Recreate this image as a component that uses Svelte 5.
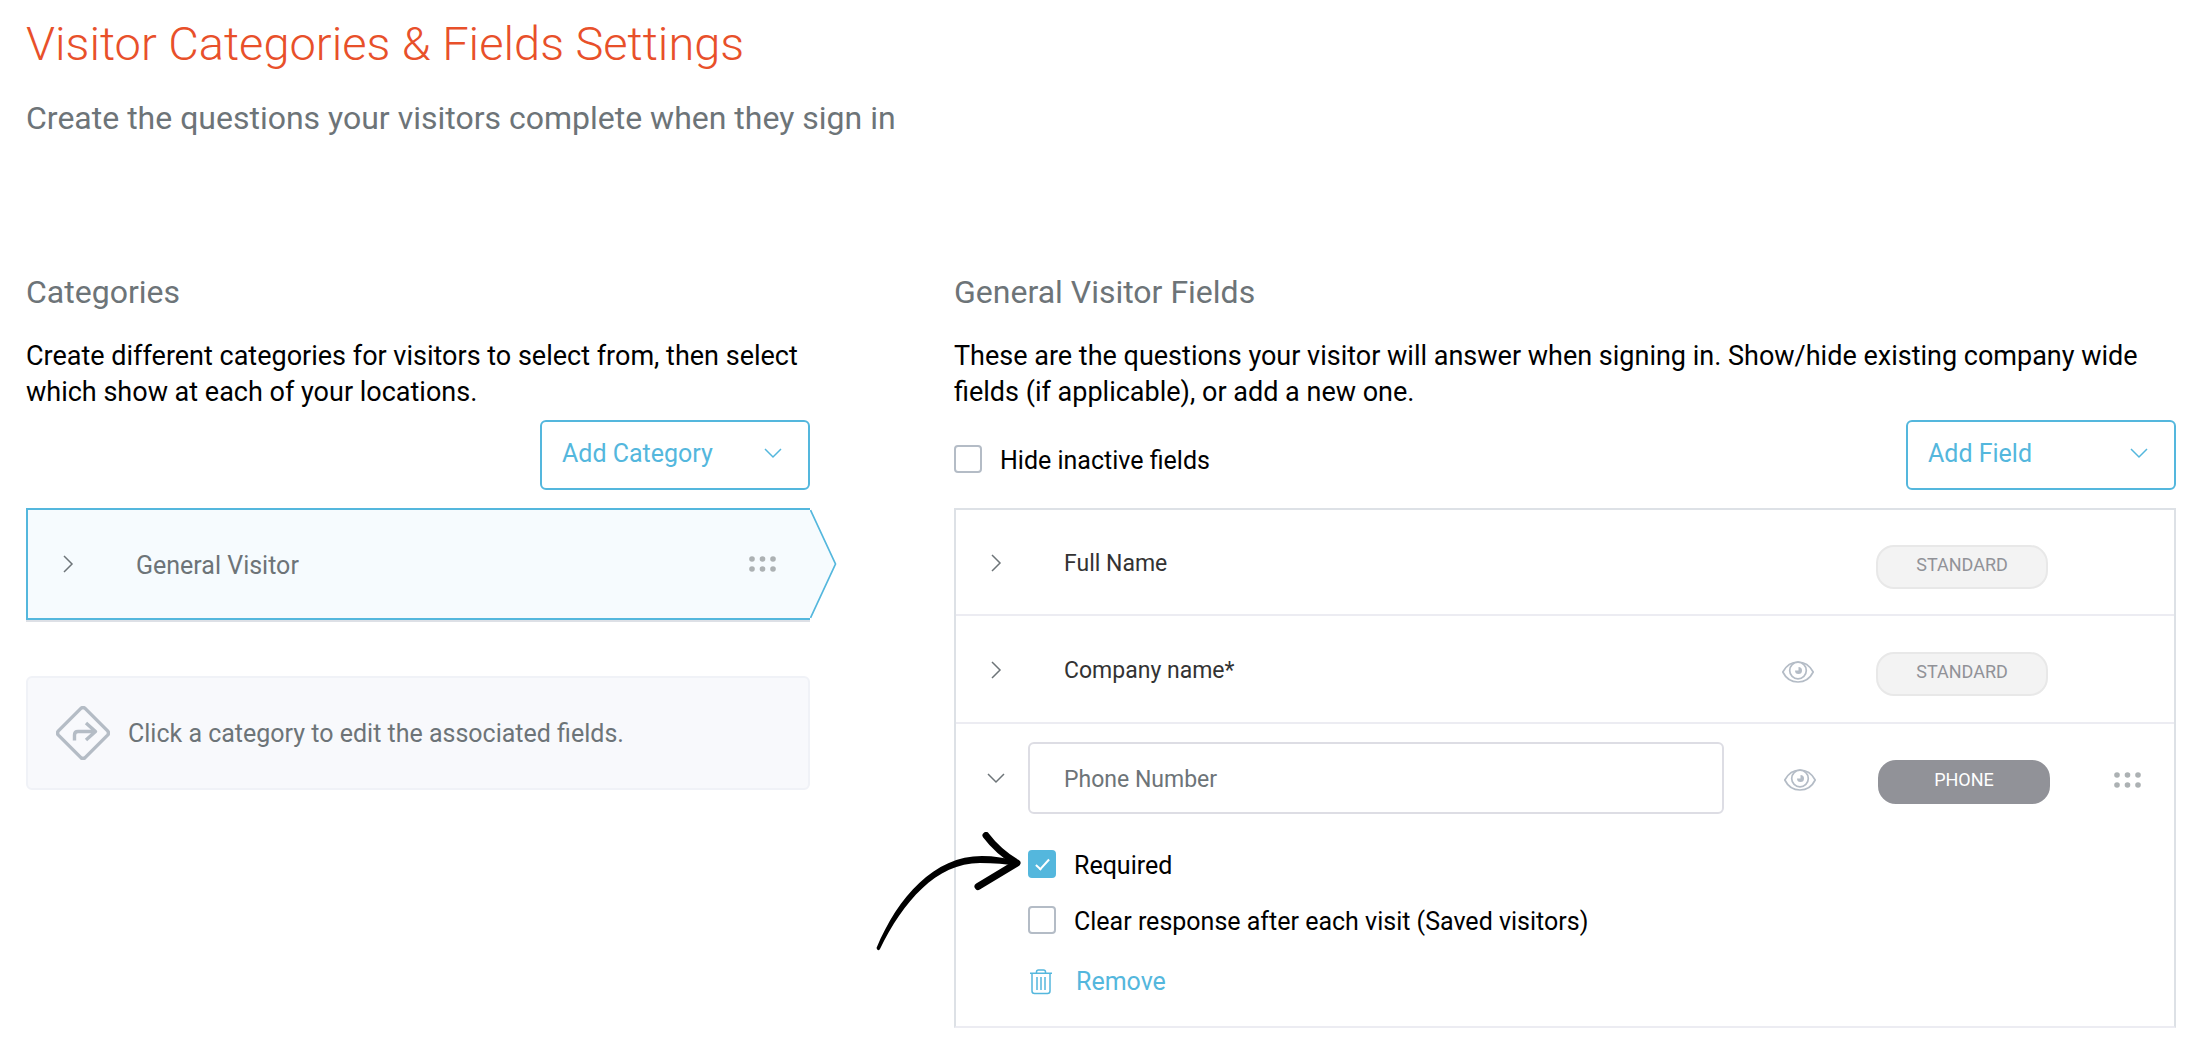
<script lang="ts">
  let hideInactive = $state(false);
  let required = $state(true);
  let clearResponse = $state(false);
  let phoneLabel = $state('');

  const standardFields = [
    { name: 'Full Name', canHide: false },
    { name: 'Company name*', canHide: true }
  ];
</script>

{#snippet chevronRight()}
  <svg width="12" height="18" viewBox="0 0 12 18" fill="none" stroke="currentColor" stroke-width="1.5" aria-hidden="true">
    <path d="M2 1l8 8-8 8" />
  </svg>
{/snippet}

{#snippet chevronDown()}
  <svg width="18" height="12" viewBox="0 0 18 12" fill="none" stroke="currentColor" stroke-width="1.5" aria-hidden="true">
    <path d="M1 2l8 8 8-8" />
  </svg>
{/snippet}

{#snippet grip()}
  <svg width="27" height="16" viewBox="0 0 27 16" fill="#acb1b3" aria-hidden="true">
    {#each [3, 13.5, 24] as cx}
      <circle {cx} cy="3" r="2.8" />
      <circle {cx} cy="13" r="2.8" />
    {/each}
  </svg>
{/snippet}

{#snippet eye()}
  <svg width="32" height="22" viewBox="0 0 32 22" fill="none" stroke="#b4bcc6" stroke-width="1.7" aria-hidden="true">
    <path d="M.8 11C4 5 9.5 1 16 1s12 4 15.2 10C28 17.5 22.5 21 16 21S4 17.5.8 11z" />
    <circle cx="16" cy="9.5" r="8.3" />
    <path d="M16.5 6v3.5H13a3.500 3.500 0 1 0 3.500-3.500z" fill="#b4bcc6" stroke="none" />
  </svg>
{/snippet}

<main>
  <header>
    <h1>Visitor Categories &amp; Fields Settings</h1>
    <p class="subtitle">Create the questions your visitors complete when they sign in</p>
  </header>

  <div class="columns">
    <section>
      <h2>Categories</h2>
      <p class="intro">Create different categories for visitors to select from, then select which show at each of your locations.</p>

      <div class="toolbar end">
        <button class="add-btn"><span>Add Category</span> {@render chevronDown()}</button>
      </div>

      <div class="category">
        <button class="toggle" aria-label="Expand category">{@render chevronRight()}</button>
        <span class="category-name">General Visitor</span>
        <button class="plain" aria-label="Reorder category">{@render grip()}</button>
        <svg class="point" width="28" height="112" viewBox="0 0 28 112" aria-hidden="true">
          <path d="M0 2h1l25 54-25 54H0z" fill="#f6fbfe" />
          <path d="M.5 2l25 54-25 54" fill="none" stroke="#54b7dd" stroke-width="1.7" />
        </svg>
      </div>

      <div class="hint">
        <svg width="54" height="54" viewBox="0 0 54 54" fill="none" stroke="#b4bcc5" stroke-width="3.4" stroke-linejoin="round" aria-hidden="true">
          <path d="M24.900 2.400q2.100-1.800 4.200 0l22.500 22.500q1.800 2.100 0 4.200L29.100 51.600q-2.100 1.800-4.200 0L2.400 29.100q-1.800-2.100 0-4.200z" />
          <path d="M18.500 34.500V29q0-3.500 3.500-3.500h17M30 17l9.500 8.500L30 34" />
        </svg>
        <span>Click a category to edit the associated fields.</span>
      </div>
    </section>

    <section>
      <h2>General Visitor Fields</h2>
      <p class="intro">These are the questions your visitor will answer when signing in. Show/hide existing company wide fields (if applicable), or add a new one.</p>

      <div class="toolbar">
        <label class="check"><input type="checkbox" bind:checked={hideInactive} /> <span>Hide inactive fields</span></label>
        <button class="add-btn"><span>Add Field</span> {@render chevronDown()}</button>
      </div>

      <div class="panel">
        {#each standardFields as field}
          <div class="row">
            <button class="toggle" aria-label="Expand {field.name}">{@render chevronRight()}</button>
            <span class="field-name">{field.name}</span>
            {#if field.canHide}
              <button class="plain eye" aria-label="Hide field">{@render eye()}</button>
            {/if}
            <span class="badge">STANDARD</span>
            <span class="handle"></span>
          </div>
        {/each}

        <!-- Expanded field -->
        <div class="row open">
          <button class="toggle" aria-label="Collapse Phone Number">{@render chevronDown()}</button>
          <input class="name-input" type="text" placeholder="Phone Number" aria-label="Field name" bind:value={phoneLabel} />
          <button class="plain eye" aria-label="Hide field">{@render eye()}</button>
          <span class="badge dark">PHONE</span>
          <span class="handle"><button class="plain" aria-label="Reorder field">{@render grip()}</button></span>
        </div>
        <div class="options">
          <label class="check"><input type="checkbox" bind:checked={required} /> <span>Required</span></label>
          <label class="check"><input type="checkbox" bind:checked={clearResponse} /> <span>Clear response after each visit (Saved visitors)</span></label>
          <button class="plain remove">
            <svg width="22" height="26" viewBox="0 0 22 26" fill="none" stroke="currentColor" stroke-width="1.5" aria-hidden="true">
              <path d="M0 4.300h22M6.500 4V3q0-2 2-2h5q2 0 2 2v1M2 4.500V22q0 2.500 2.500 2.500h13Q20 24.500 20 22V4.500M7 8v13M11 8v13M15 8v13" />
            </svg>
            <span>Remove</span>
          </button>

          <!-- Pointer to the Required option -->
          <svg class="arrow" width="150" height="124" viewBox="0 0 150 124" aria-hidden="true">
            <path d="M.5 116C22 65 58 24 106 24c12 0 24 2 36 5v5c-12-2-24-3-38-3C60 31 27 70 4 117q-2 3-3.500-1z" />
            <path d="M110 3.500q12 16 31 27.500L102 54.500" fill="none" stroke="#000" stroke-width="7" stroke-linecap="round" stroke-linejoin="round" />
          </svg>
        </div>
      </div>
    </section>
  </div>
</main>

<style>
  :global(body) {
    margin: 0;
    background: #fff;
  }

  main {
    padding: 12px 14px 14px 26px;
    font-family: Roboto, 'Liberation Sans', sans-serif;
    font-size: 25px;
    color: #000;
  }

  h1 {
    margin: 0;
    font-size: 47px;
    font-weight: 300;
    line-height: 64px;
    color: #e8502a;
  }

  .subtitle {
    margin: 22px 0 0;
    font-size: 32px;
    line-height: 40px;
    color: #6d7478;
  }

  .columns {
    display: grid;
    grid-template-columns: 784fr 1222fr;
    gap: 144px;
    margin-top: 134px;
  }

  h2 {
    margin: 0;
    font-size: 32px;
    font-weight: 400;
    line-height: 40px;
    color: #6d7478;
  }

  .intro {
    margin: 26px 0 10px;
    font-size: 27px;
    line-height: 36px;
  }

  .toolbar {
    display: flex;
    align-items: center;
    justify-content: space-between;
    margin-bottom: 18px;
  }

  .toolbar.end {
    justify-content: flex-end;
  }

  button,
  input {
    box-sizing: border-box;
    font-family: inherit;
    font-size: inherit;
  }

  svg {
    display: block;
    flex-shrink: 0;
  }

  .add-btn {
    display: flex;
    align-items: center;
    justify-content: space-between;
    width: 270px;
    height: 70px;
    padding: 0 26px 4px 20px;
    color: #54b7dd;
    background: #fff;
    border: 2px solid #54b7dd;
    border-radius: 6px;
    cursor: pointer;
  }

  .plain,
  .toggle {
    display: flex;
    align-items: center;
    padding: 0;
    color: #6d7478;
    background: none;
    border: 0;
    cursor: pointer;
  }

  .toggle {
    justify-content: center;
    width: 32px;
    height: 32px;
    flex-shrink: 0;
  }

  .category {
    position: relative;
    display: flex;
    align-items: center;
    box-sizing: border-box;
    height: 112px;
    padding: 0 34px 0 24px;
    background: #f6fbfe;
    border: 2px solid #54b7dd;
    border-right: 0;
    box-shadow: 0 2px 0 #dde0e6;
  }

  .category-name {
    flex: 1;
    margin-left: 52px;
    padding-top: 2px;
    color: #6d7478;
  }

  .point {
    position: absolute;
    top: -2px;
    left: 100%;
  }

  .hint {
    display: flex;
    align-items: center;
    gap: 18px;
    box-sizing: border-box;
    height: 114px;
    margin-top: 56px;
    padding: 0 28px;
    color: #6d7478;
    background: #f8f9fc;
    border: 2px solid #f0f2f7;
    border-radius: 6px;
  }

  .check {
    display: flex;
    align-items: center;
    gap: 18px;
    line-height: 28px;
    cursor: pointer;
  }

  .check span {
    padding-top: 2px;
    margin-bottom: -2px;
  }

  .check input {
    appearance: none;
    display: grid;
    place-items: center;
    width: 28px;
    height: 28px;
    margin: 0;
    background: #fff;
    border: 2px solid #b4bcc6;
    border-radius: 4px;
  }

  .check input:checked {
    background: #54b7dd;
    border-color: #54b7dd;
  }

  .check input:checked::before {
    content: '';
    width: 5px;
    height: 12px;
    margin-top: -3px;
    border: solid #fff;
    border-width: 0 2px 2px 0;
    transform: rotate(42deg);
  }

  .toolbar .check {
    padding-top: 8px;
  }

  .panel {
    border: 2px solid #dde1e6;
    border-bottom-color: #ececf2;
  }

  .row {
    display: flex;
    align-items: center;
    box-sizing: border-box;
    height: 108px;
    padding: 2px 0 0 24px;
    border-bottom: 2px solid #ececf2;
  }

  .row:first-child {
    height: 106px;
  }

  .row.open {
    padding-top: 0;
    border-bottom: 0;
  }

  .field-name {
    flex: 1;
    margin-left: 52px;
    font-size: 23px;
    color: #333;
  }

  .name-input {
    flex: 1;
    min-width: 0;
    height: 72px;
    margin-left: 16px;
    padding: 2px 34px 0;
    font-size: 23px;
    color: #333;
    background: #fff;
    border: 2px solid #dddde4;
    border-radius: 6px;
  }

  .name-input::placeholder {
    color: #6d7478;
    opacity: 1;
  }

  .eye {
    margin: 4px 62px 0 60px;
  }

  .badge {
    box-sizing: border-box;
    width: 172px;
    height: 44px;
    margin-top: 8px;
    font-size: 18px;
    line-height: 36px;
    text-align: center;
    color: #919298;
    background: #f3f3f3;
    border: 2px solid #e8e8e8;
    border-radius: 18px;
  }

  .badge.dark {
    color: #fff;
    background: #919298;
    border-color: #919298;
  }

  .handle {
    display: flex;
    justify-content: center;
    box-sizing: border-box;
    width: 126px;
    padding: 4px 0 0 30px;
  }

  .open .handle {
    width: 124px;
  }

  .options {
    position: relative;
    display: flex;
    flex-direction: column;
    align-items: flex-start;
    gap: 28px;
    padding: 18px 0 26px 72px;
  }

  .remove {
    gap: 24px;
    padding: 2px 0 0 2px;
    line-height: 36px;
    color: #54b7dd;
  }

  .arrow {
    position: absolute;
    top: 0;
    left: -80px;
  }
</style>
